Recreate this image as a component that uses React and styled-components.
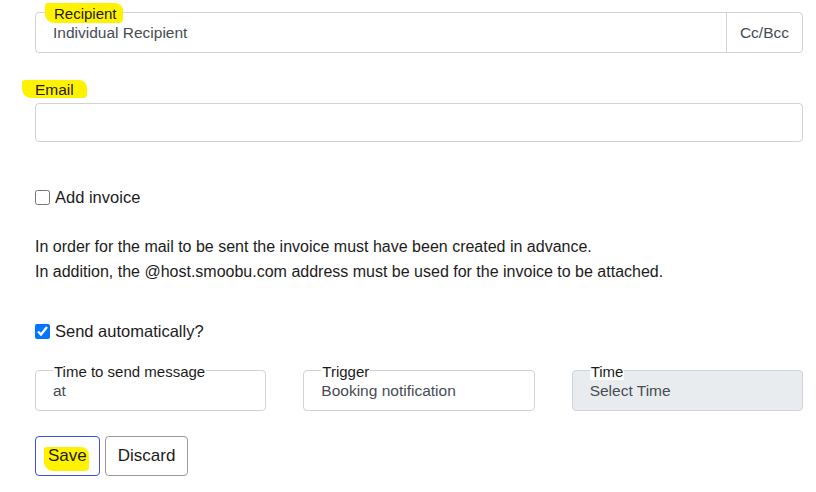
import React from "react";
import styled, { createGlobalStyle } from "styled-components";

const Global = createGlobalStyle`
  html, body { margin: 0; padding: 0; background: #fff; }
  body { font-family: "Liberation Sans", Arial, sans-serif; color: #212529; }
  * { box-sizing: border-box; }
`;

const Page = styled.div`
  width: 816px;
  padding: 12px 13px 0 35px;
  display: flex;
  flex-direction: column;
`;

const Highlight = styled.span`
  position: absolute;
  background: #fff200;
  border-radius: 3px 8px 4px 9px;
  z-index: 0;
`;

const FieldBox = styled.div`
  position: relative;
  display: flex;
  align-items: stretch;
  height: ${(p) => p.$h || 41}px;
  width: ${(p) => (p.$w ? p.$w + "px" : "100%")};
  border: 1px solid #ced4da;
  border-radius: 4px;
  background: ${(p) => (p.$disabled ? "#e9ecef" : "#fff")};
`;

const FloatLabel = styled.span`
  position: absolute;
  left: 17px;
  top: -7px;
  padding: 0 1px;
  font-size: 15px;
  line-height: 16px;
  color: #1c1c1c;
  background: ${(p) => (p.$clear ? "transparent" : "#fff")};
  z-index: 1;
`;

const Value = styled.div`
  flex: 1;
  display: flex;
  align-items: center;
  padding: 1px 0 0 17px;
  font-size: 15.5px;
  color: #474c55;
`;

const Addon = styled.div`
  display: flex;
  align-items: center;
  padding: 0 13px 0 13px;
  border-left: 1px solid #ced4da;
  font-size: 15.5px;
  color: #474c55;
`;

const TopLabel = styled.div`
  position: relative;
  margin-top: 27px;
  height: 20px;
  display: flex;
  align-items: center;
  font-size: 15.5px;
  color: #1c1c1c;
`;

const LabelText = styled.span`
  position: relative;
  z-index: 1;
`;

const CheckRow = styled.label`
  display: flex;
  align-items: center;
  gap: 5px;
  margin-top: ${(p) => p.$mt}px;
  font-size: 16.5px;
  color: #1c1c1c;
  height: 20px;
`;

const Check = styled.input`
  margin: 0;
  width: 15px;
  height: 15px;
`;

const Note = styled.p`
  margin: 27px 0 0 0;
  font-size: 16px;
  line-height: 25px;
  color: #1c1c1c;
`;

const Row = styled.div`
  display: flex;
  gap: 37px;
  margin-top: 29px;
`;

const Buttons = styled.div`
  display: flex;
  gap: 5px;
  margin-top: 25px;
`;

const Button = styled.button`
  position: relative;
  height: 40px;
  padding: 0 12px;
  font-family: inherit;
  font-size: 17px;
  color: #1c1c1c;
  background: #fff;
  border: 1px solid ${(p) => (p.$focus ? "#3d4fe6" : "#9a9a9a")};
  border-radius: 4px;
`;

export default function App() {
  return (
    <>
      <Global />
      <Page>
        <FieldBox>
          <Highlight style={{ left: 9, top: -10, width: 78, height: 20 }} />
          <FloatLabel $clear>Recipient</FloatLabel>
          <Value>Individual Recipient</Value>
          <Addon>Cc/Bcc</Addon>
        </FieldBox>

        <TopLabel>
          <Highlight style={{ left: -13, top: 0, width: 65, height: 18 }} />
          <LabelText>Email</LabelText>
        </TopLabel>
        <div style={{ marginTop: 3 }}>
          <FieldBox $h={39} />
        </div>

        <CheckRow $mt={45}>
          <Check type="checkbox" />
          Add invoice
        </CheckRow>

        <Note>
          In order for the mail to be sent the invoice must have been created in advance.
          <br />
          In addition, the @host.smoobu.com address must be used for the invoice to be attached.
        </Note>

        <CheckRow $mt={37}>
          <Check type="checkbox" defaultChecked />
          Send automatically?
        </CheckRow>

        <Row>
          <FieldBox $w={232}>
            <FloatLabel>Time to send message</FloatLabel>
            <Value>at</Value>
          </FieldBox>
          <FieldBox $w={232}>
            <FloatLabel>Trigger</FloatLabel>
            <Value>Booking notification</Value>
          </FieldBox>
          <FieldBox $w={232} $disabled>
            <FloatLabel>Time</FloatLabel>
            <Value>Select Time</Value>
          </FieldBox>
        </Row>

        <Buttons>
          <Button $focus>
            <Highlight style={{ left: 8, top: 10, width: 45, height: 24 }} />
            <LabelText>Save</LabelText>
          </Button>
          <Button>Discard</Button>
        </Buttons>
      </Page>
    </>
  );
}
